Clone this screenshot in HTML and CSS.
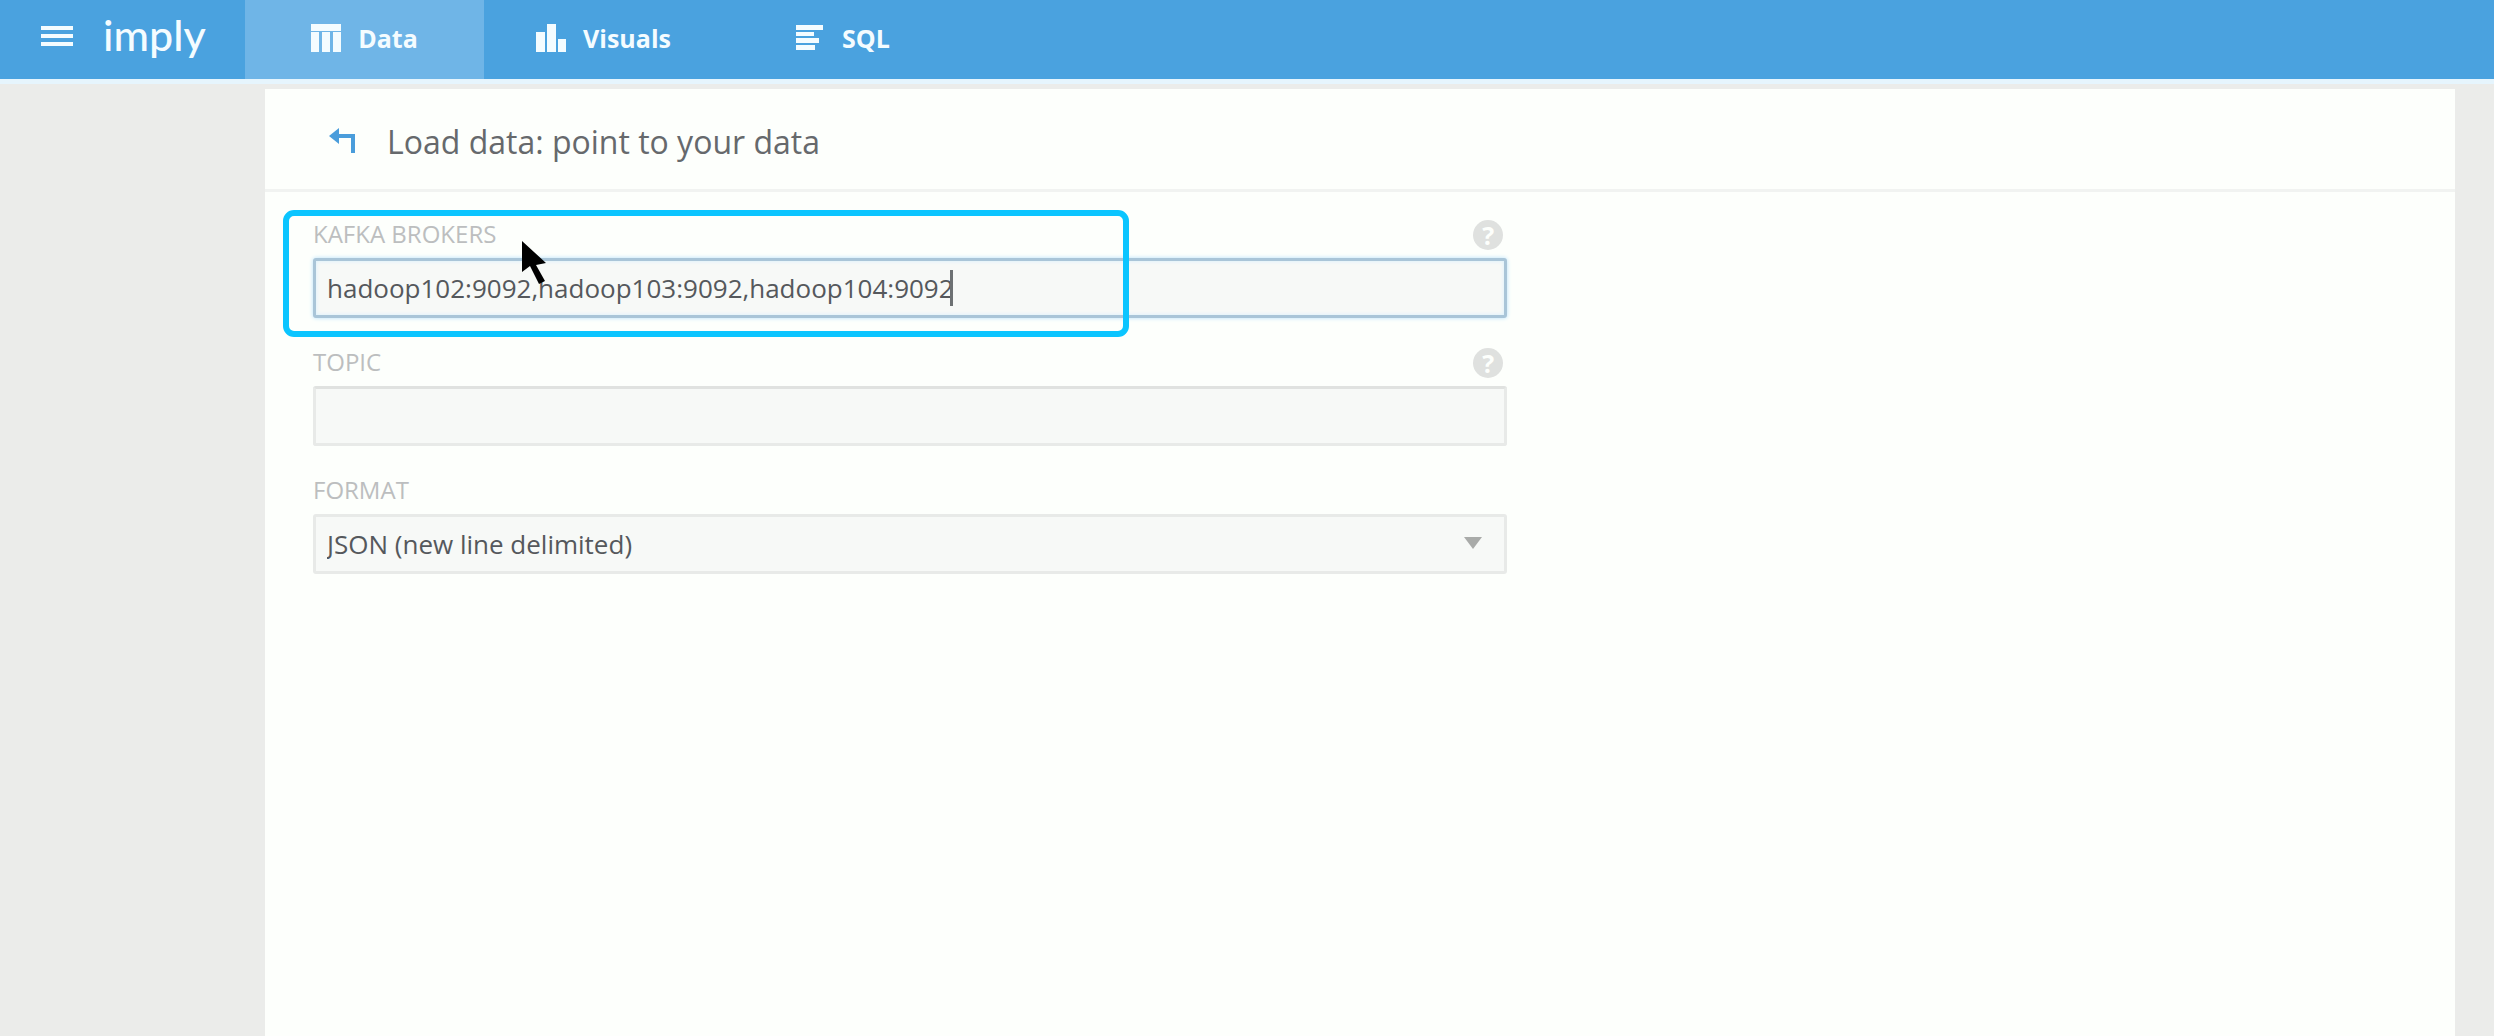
FILE: index.html
```html
<!DOCTYPE html>
<html lang="en">
  <head>
    <meta charset="UTF-8" />
    <meta name="viewport" content="width=device-width, initial-scale=1.0" />
    <title>Imply - Load data</title>
    <link rel="stylesheet" href="styles.css">
  </head>
  <body>
    <!-- Top Bar -->
    <header class="topbar">
      <button class="menu-btn" type="button" aria-label="Menu">
        <svg width="32" height="24" viewBox="0 0 32 24" fill="currentColor">
          <rect y="2" width="32" height="4" />
          <rect y="10" width="32" height="4" />
          <rect y="18" width="32" height="4" />
        </svg>
      </button>
      <a class="logo" href="#">imply</a>
      <nav class="tabs">
        <a class="tab active" href="#">
          <svg width="30" height="28" viewBox="0 0 30 28" fill="currentColor">
            <path d="M0 0h30v7H0zM0 8h8v20H0zM11 8h8v20h-8zM22 8h8v20h-8z" />
          </svg>
          Data
        </a>
        <a class="tab" href="#">
          <svg width="30" height="28" viewBox="0 0 30 28" fill="currentColor">
            <path d="M0 8h9v20H0zM11 0h9v28h-9zM22 15h8v13h-8z" />
          </svg>
          Visuals
        </a>
        <a class="tab" href="#">
          <svg width="30" height="28" viewBox="0 0 30 28" fill="currentColor">
            <path d="M1 1h27v5H1zM1 8h18v4H1zM1 14h23v5H1zM1 21h19v5H1z" />
          </svg>
          SQL
        </a>
      </nav>
    </header>

    <main class="panel">
      <div class="panel-header">
        <button class="back-btn" type="button" aria-label="Back">
          <svg width="28" height="28" viewBox="0 0 28 28">
            <path d="M0 9L10 1v16z" fill="currentColor" />
            <path d="M8 9h16v17" fill="none" stroke="currentColor" stroke-width="4" />
          </svg>
        </button>
        <h1>Load data: point to your data</h1>
      </div>

      <form class="load-form">
        <div class="field">
          <div class="field-head">
            <label for="brokers">Kafka brokers</label>
            <button class="help-btn" type="button">?</button>
          </div>
          <input class="control focused" type="text" id="brokers" value="hadoop102:9092,hadoop103:9092,hadoop104:9092" />
          <span class="caret"></span>
          <div class="highlight"></div>
          <svg class="pointer" width="26" height="46" viewBox="0 0 26 46">
            <path d="M1 1v31l8-6 9 18 6-3-9-16 10-2z" />
          </svg>
        </div>

        <div class="field">
          <div class="field-head">
            <label for="topic">Topic</label>
            <button class="help-btn" type="button">?</button>
          </div>
          <input class="control" type="text" id="topic" />
        </div>

        <div class="field">
          <div class="field-head">
            <label for="format">Format</label>
          </div>
          <select class="control" id="format">
            <option>JSON (new line delimited)</option>
          </select>
          <span class="arrow"></span>
        </div>
      </form>
    </main>
  </body>
</html>
```

FILE: styles.css
```css
/* General Styles */
* {
  box-sizing: border-box;
}

body {
  margin: 0;
  min-height: 100vh;
  display: flex;
  flex-direction: column;
  font-family: "Open Sans", sans-serif;
  background-color: #ebecea;
  color: #55585c;
}

button {
  border: none;
  padding: 0;
  background: none;
  font-family: inherit;
  cursor: pointer;
}

svg {
  display: block;
}

/* Top Bar */
.topbar {
  display: flex;
  align-items: stretch;
  height: 84px;
  color: #f4fcff;
  background-color: #4aa2df;
  border-bottom: 5px solid #e6f5fd;
}

.menu-btn {
  padding: 0 0 8px 41px;
  color: inherit;
}

.logo {
  width: 172px;
  padding-left: 30px;
  font-family: Lato, sans-serif;
  font-size: 43px;
  font-weight: 500;
  line-height: 70px;
  color: inherit;
  text-decoration: none;
}

.tabs {
  display: flex;
}

.tab {
  display: flex;
  align-items: center;
  gap: 17px;
  padding: 0 52px 4px;
  min-width: 239px;
  justify-content: center;
  font-size: 25px;
  font-weight: 700;
  color: inherit;
  text-decoration: none;
}

.tab.active {
  background-color: #6fb5e7;
}

/* Panel */
.panel {
  flex-grow: 1;
  margin: 5px 39px 0 265px;
  background-color: #fdfffc;
}

.panel-header {
  display: flex;
  align-items: center;
  gap: 30px;
  height: 103px;
  padding: 4px 64px 0;
  border-bottom: 3px solid #f1f3f1;
}

.back-btn {
  color: #4a9ddb;
}

h1 {
  margin: 0;
  font-size: 32px;
  font-weight: 400;
  color: #66696c;
}

/* Form */
.load-form {
  display: flex;
  flex-direction: column;
  gap: 24px;
  width: 57%;
  padding: 22px 6px 22px 48px;
}

.field {
  position: relative;
}

.field-head {
  display: flex;
  align-items: center;
  justify-content: space-between;
  height: 44px;
  padding: 0 4px 2px 0;
}

label {
  padding-bottom: 3px;
  font-size: 24px;
  text-transform: uppercase;
  color: #bcbebf;
}

.help-btn {
  width: 30px;
  height: 30px;
  border-radius: 50%;
  font-size: 25px;
  font-weight: 700;
  line-height: 30px;
  color: #fdfffc;
  background-color: #dfe1df;
}

.control {
  display: block;
  width: 100%;
  height: 60px;
  padding: 0 11px;
  border: 3px solid #e8eae8;
  border-radius: 3px;
  font-family: inherit;
  font-size: 26px;
  color: #55585c;
  background-color: #f7f9f7;
  appearance: none;
  outline: none;
}

input.control {
  border-top-color: #e0e2e0;
}

input.control.focused {
  border-color: #a9c5d8;
  box-shadow: 0 0 4px #b5e0fb, inset 0 0 4px #d5effd;
}

.arrow {
  position: absolute;
  right: 25px;
  bottom: 25px;
  border: 9px solid transparent;
  border-top: 12px solid #a9aba9;
  border-bottom: none;
}

/* Overlays */
.caret {
  position: absolute;
  left: 637px;
  bottom: 12px;
  width: 3px;
  height: 36px;
  background-color: #6d7173;
}

.highlight {
  position: absolute;
  top: -4px;
  left: -30px;
  width: 846px;
  height: 127px;
  border: 6px solid #0bc5ff;
  border-radius: 11px;
  pointer-events: none;
}

.pointer {
  position: absolute;
  top: 26px;
  left: 208px;
}
```
